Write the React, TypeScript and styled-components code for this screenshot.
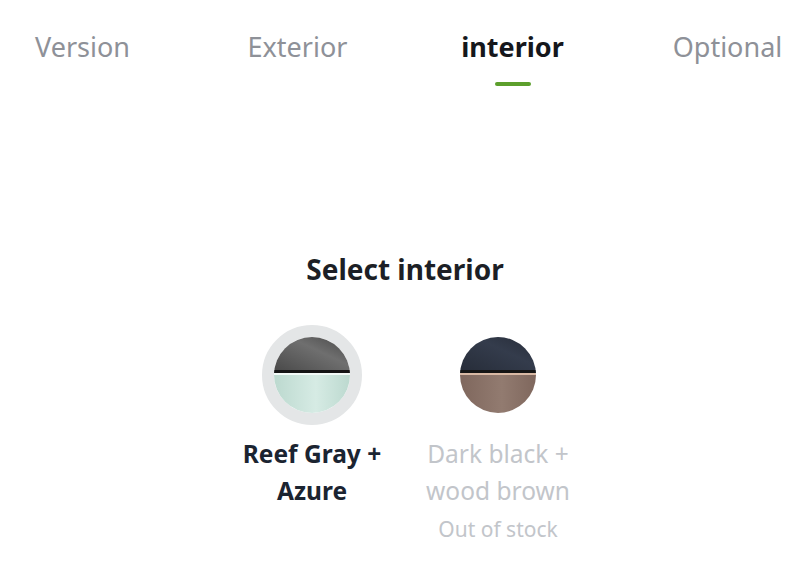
import styled, { createGlobalStyle } from "styled-components";

const GlobalStyle = createGlobalStyle`
  html, body {
    margin: 0;
    padding: 0;
    background: #ffffff;
    overflow: hidden;
  }
  body {
    font-family: "Noto Sans", "Open Sans", sans-serif;
  }
`;

const Page = styled.div`
  width: 810px;
  display: flex;
  flex-direction: column;
  align-items: center;
`;

const Tabs = styled.div`
  width: 100%;
  display: flex;
  justify-content: center;
  padding-top: 29px;
`;

const Tab = styled.div<{ $active?: boolean }>`
  flex: 0 0 215px;
  display: flex;
  flex-direction: column;
  align-items: center;
  font-size: 27px;
  line-height: 36px;
  letter-spacing: 0;
  font-weight: ${({ $active }) => ($active ? 700 : 400)};
  color: ${({ $active }) => ($active ? "#15171c" : "#8e9198")};
`;

const Underline = styled.div<{ $visible?: boolean }>`
  margin-top: 17px;
  width: 36px;
  height: 4px;
  border-radius: 2px;
  background: ${({ $visible }) => ($visible ? "#5c9f2c" : "transparent")};
`;

const Heading = styled.h2`
  margin: 165px 0 0;
  font-size: 28px;
  line-height: 36px;
  font-weight: 700;
  color: #1c1f26;
`;

const Options = styled.div`
  margin-top: 38px;
  display: flex;
  gap: 16px;
`;

const Option = styled.div<{ $disabled?: boolean }>`
  width: 170px;
  display: flex;
  flex-direction: column;
  align-items: center;
  text-align: center;
  color: ${({ $disabled }) => ($disabled ? "#c2c5ca" : "#1b2431")};
`;

const Ring = styled.div<{ $selected?: boolean }>`
  width: 76px;
  height: 76px;
  border-radius: 50%;
  border: 12px solid ${({ $selected }) => ($selected ? "#e4e6e7" : "transparent")};
  display: flex;
`;

const Name = styled.div<{ $disabled?: boolean }>`
  margin-top: 10px;
  font-size: 24.5px;
  line-height: 37px;
  font-weight: ${({ $disabled }) => ($disabled ? 400 : 700)};
`;

const Note = styled.div`
  font-size: 21px;
  line-height: 26px;
  margin-top: 7px;
`;

type Swatch = {
  id: string;
  top: [string, string];
  bottom: [string, string];
  line: string;
};

const SwatchIcon = ({ s }: { s: Swatch }) => (
  <svg width="76" height="76" viewBox="0 0 76 76">
    <defs>
      <linearGradient id={`t-${s.id}`} x1="0" y1="1" x2="1" y2="0">
        <stop offset="0" stopColor={s.top[0]} />
        <stop offset="0.6" stopColor={s.top[1]} />
        <stop offset="1" stopColor={s.top[0]} />
      </linearGradient>
      <linearGradient id={`b-${s.id}`} x1="0" y1="0" x2="1" y2="0">
        <stop offset="0" stopColor={s.bottom[0]} />
        <stop offset="0.55" stopColor={s.bottom[1]} />
        <stop offset="1" stopColor={s.bottom[0]} />
      </linearGradient>
      <clipPath id={`c-${s.id}`}>
        <circle cx="38" cy="38" r="38" />
      </clipPath>
    </defs>
    <g clipPath={`url(#c-${s.id})`}>
      <rect x="0" y="0" width="76" height="36" fill={`url(#t-${s.id})`} />
      <rect x="0" y="33" width="76" height="3" fill="#151515" />
      <rect x="0" y="36" width="76" height="2" fill={s.line} />
      <rect x="0" y="38" width="76" height="38" fill={`url(#b-${s.id})`} />
    </g>
  </svg>
);

const gray: Swatch = {
  id: "gray",
  top: ["#474747", "#6f6f6f"],
  bottom: ["#bcd9cf", "#d6ebe4"],
  line: "#f3fbf8",
};

const dark: Swatch = {
  id: "dark",
  top: ["#262c38", "#343c4c"],
  bottom: ["#7f675d", "#927b70"],
  line: "#d9b9a4",
};

export default function App() {
  const tabs = ["Version", "Exterior", "interior", "Optional"];
  return (
    <Page>
      <GlobalStyle />
      <Tabs>
        {tabs.map((t) => (
          <Tab key={t} $active={t === "interior"}>
            {t}
            <Underline $visible={t === "interior"} />
          </Tab>
        ))}
      </Tabs>
      <Heading>Select interior</Heading>
      <Options>
        <Option>
          <Ring $selected>
            <SwatchIcon s={gray} />
          </Ring>
          <Name>Reef Gray + Azure</Name>
        </Option>
        <Option $disabled>
          <Ring>
            <SwatchIcon s={dark} />
          </Ring>
          <Name $disabled>Dark black + wood brown</Name>
          <Note>Out of stock</Note>
        </Option>
      </Options>
    </Page>
  );
}
